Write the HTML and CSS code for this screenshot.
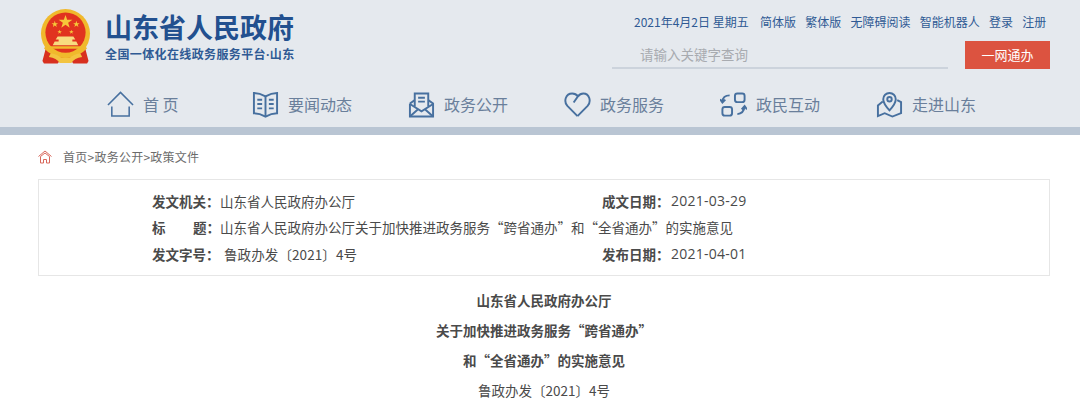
FILE: index.html
```html
<!DOCTYPE html>
<html lang="zh-CN">
<head>
<meta charset="utf-8">
<title>山东省人民政府</title>
<link rel="stylesheet" href="styles.css">
</head>
<body>
<header class="site-header">
  <div class="top">
    <div class="brand">
      <svg class="emblem" viewBox="0 0 52 56" aria-hidden="true">
        <path d="M7 36 L2.500 53 L4 55.500 H18 L21 52 H31 L34 55.500 H48 L49.500 53 L45 36 Z" fill="#d8301f"/>
        <circle cx="26" cy="25" r="25" fill="#f0b92c"/>
        <circle cx="26" cy="24" r="20.500" fill="#e1331f"/>
        <path d="M26 6 l1.700 5 h5.300 l-4.300 3.100 1.600 5 -4.300 -3.100 -4.300 3.100 1.600 -5 -4.300 -3.100 h5.300 Z" fill="#f6c93a"/>
        <path d="M15 12 l.9 2.400 h2.500 l-2 1.500 .8 2.400 -2.200 -1.500 -2 1.500 .8 -2.400 -2 -1.500 h2.500 Z M37 12 l.9 2.400 h2.500 l-2 1.500 .8 2.400 -2.200 -1.500 -2 1.500 .8 -2.400 -2 -1.500 h2.500 Z M20 21 l.6 1.600 h1.700 l-1.400 1 .5 1.600 -1.400 -1 -1.400 1 .5 -1.600 -1.400 -1 h1.700 Z M32 21 l.6 1.600 h1.700 l-1.400 1 .5 1.600 -1.400 -1 -1.400 1 .5 -1.600 -1.400 -1 h1.700 Z" fill="#f6c93a"/>
        <path d="M18 28 H34 L36 31 H33 V33 H37 L39 37 H13 L15 33 H19 V31 H16 Z" fill="#f8dc80"/>
        <path d="M10 38 H42 V40.500 H10 Z" fill="#f0b92c"/>
        <path d="M7 37 Q12 44 26 46 Q40 44 45 37 L48 40 Q40 49 26 50 Q12 49 4 40 Z" fill="#f0b92c"/>
        <path d="M11 45 Q18 46 22 50 H30 Q34 46 41 45 L43 49 Q35 50 32 55 H20 Q17 50 9 49 Z" fill="#f3c440"/>
      </svg>
      <div class="brand-text">
        <div class="brand-name">山东省人民政府</div>
        <div class="brand-sub">全国一体化在线政务服务平台<span class="dot">·</span>山东</div>
      </div>
    </div>
    <div class="tools">
      <div class="links">
        <span class="date">2021年4月2日 星期五</span>
        <a>简体版</a><a>繁体版</a><a>无障碍阅读</a><a>智能机器人</a><a>登录</a><a>注册</a>
      </div>
      <div class="search-row">
        <div class="search">请输入关键字查询</div>
        <a class="one-net">一网通办</a>
      </div>
    </div>
  </div>
  <nav class="nav">
    <a class="nav-item first">
      <svg class="nav-icon thin" viewBox="0 0 28 28" aria-hidden="true"><path d="M1 14.500 L14 1.500 L27 14.500"/><path d="M5 16 V26 H23 V16"/></svg>
      <span>首 页</span>
    </a>
    <a class="nav-item">
      <svg class="nav-icon" viewBox="0 0 28 28" aria-hidden="true"><path d="M14 5.500 Q8 2 2 2 V23 Q8 23 14 26.500 Q20 23 26 23 V2 Q20 2 14 5.500 Z"/><path d="M14 5.500 V26.500"/><path d="M5.500 9 H10.500 M5.500 13.500 H10.500 M5.500 18 H10.500 M17.500 9 H22.500 M17.500 13.500 H22.500 M17.500 18 H22.500"/></svg>
      <span>要闻动态</span>
    </a>
    <a class="nav-item">
      <svg class="nav-icon" viewBox="0 0 28 28" aria-hidden="true"><path d="M2 13 V26.500 H26 V13 L21 9.500"/><path d="M7 9.500 L2 13"/><path d="M7 16 V2.500 H21 V16"/><path d="M10.500 7 H17.500 M10.500 11 H17.500"/><path d="M2 13.500 L14 21 L26 13.500 M2 26.500 L11 18.500 M26 26.500 L17 18.500"/></svg>
      <span>政务公开</span>
    </a>
    <a class="nav-item">
      <svg class="nav-icon" viewBox="0 0 28 28" aria-hidden="true"><path d="M14 26 L3.500 15.500 C-0.500 11 1.500 2.500 8.500 2.500 C11 2.500 13 3.500 14.500 5.500 L10 12"/><path d="M14.500 5.500 C16 3.500 18 2.500 20 2.500 C26.500 2.500 28.500 11 24.500 15.500 L14 26"/></svg>
      <span>政务服务</span>
    </a>
    <a class="nav-item">
      <svg class="nav-icon" viewBox="0 0 28 28" aria-hidden="true"><path d="M10 4.500 Q3 4.500 2.500 11 M0 8.500 L2.500 12 L5.500 9"/><rect x="15.500" y="2.500" width="10" height="9" rx="2.500"/><rect x="2.500" y="16.500" width="10" height="9" rx="2.500"/><path d="M18 24 Q24.500 23.500 25.500 16.500 M22.500 19 L25.500 15.500 L28 19"/></svg>
      <span>政民互动</span>
    </a>
    <a class="nav-item">
      <svg class="nav-icon" viewBox="0 0 28 28" aria-hidden="true"><path d="M14 20 Q7.500 13 7.500 8.500 A6.500 6.500 0 0 1 20.500 8.500 Q20.500 13 14 20 Z"/><circle cx="14" cy="8.500" r="2.300"/><path d="M7 11 L2 15 V26 L9 23 L17 26.500 L26 23 V11.500 L22 9.500"/></svg>
      <span>走进山东</span>
    </a>
  </nav>
  <div class="strip"></div>
</header>
<main class="content">
  <div class="crumb">
    <svg class="home" viewBox="0 0 14 14" aria-hidden="true"><path d="M.5 6.500 L7 1 L13.500 6.500 M2.500 6.500 L7 3 L11.500 6.500 M2.500 6.500 V13 H5.500 V9.500 H8.500 V13 H11.500 V6.500"/></svg>
    <span>首页&gt;政务公开&gt;政策文件</span>
  </div>
  <section class="meta">
    <div class="meta-row">
      <div class="cell"><b>发文机关：</b><span>山东省人民政府办公厅</span></div>
      <div class="cell"><b>成文日期：</b><span class="num">2021-03-29</span></div>
    </div>
    <div class="meta-row">
      <div class="cell"><b class="spread"><i>标</i><i>题：</i></b><span>山东省人民政府办公厅关于加快推进政务服务“跨省通办”和“全省通办”的实施意见</span></div>
    </div>
    <div class="meta-row">
      <div class="cell"><b>发文字号：</b><span class="code">鲁政办发〔2021〕4号</span></div>
      <div class="cell"><b>发布日期：</b><span class="num">2021-04-01</span></div>
    </div>
  </section>
  <article class="doc">
    <p class="strong">山东省人民政府办公厅</p>
    <p class="strong">关于加快推进政务服务“跨省通办”</p>
    <p class="strong">和“全省通办”的实施意见</p>
    <p>鲁政办发〔2021〕4号</p>
  </article>
</main>
</body>
</html>
```
FILE: styles.css
```css
* { box-sizing: border-box; }
html, body { margin: 0; height: 405px; overflow: hidden; background: #fff; }
body { font-family: "Noto Sans CJK SC", sans-serif; color: #4a4a4a; }
.site-header { background: #e5e9ee; }
.top { display: flex; justify-content: space-between; height: 83px; padding: 9px 30px 0 40px; }
.brand { display: flex; gap: 14px; align-items: flex-start; }
.emblem { width: 51px; height: 55px; display: block; }
.brand-text { display: flex; flex-direction: column; }
.brand-name { font: 700 27px/30px "Noto Sans CJK SC", sans-serif; color: #22508f; margin-top: 3px; }
.brand-sub { font: 700 12px/18px "Noto Sans CJK SC", sans-serif; color: #2f5a94; margin-top: 3px; letter-spacing: .38px; }
.dot { font-family: "Open Sans", sans-serif; }
.tools { display: flex; flex-direction: column; width: 438px; }
.links { display: flex; height: 26px; margin-top: 5px; padding-left: 22px; white-space: nowrap; font: 400 12px/16px "Noto Sans CJK SC", sans-serif; color: #2f5a94; }
.links a { margin-left: 9.250px; }
.links .date { margin-right: 2px; }
.search-row { display: flex; justify-content: space-between; align-items: flex-end; margin-top: 1px; }
.search { width: 336px; height: 28px; padding-left: 28px; border-bottom: 2px solid #ccd3dc; font: 400 13.5px/26px "Noto Sans CJK SC", sans-serif; color: #a8abb0; }
.one-net { width: 85px; height: 28px; background: #dc5340; color: #fff; text-align: center; font: 400 13px/27px "Noto Sans CJK SC", sans-serif; }
.nav { display: flex; height: 44px; padding: 7px 0 0 107px; }
.nav-item { display: flex; width: 156px; align-items: flex-start; gap: 9px; font: 400 16px/28px "Noto Sans CJK SC", sans-serif; color: #6a7f9b; }
.nav-item.first { width: 145px; }
.nav-icon { width: 27px; height: 27px; flex: none; fill: none; stroke: #47709f; stroke-width: 2; margin-top: 1px; }
.nav-icon.thin { stroke-width: 1.600; }
.strip { height: 8px; background: #b9c5d3; }
.content { padding: 0 30px 0 38px; }
.crumb { display: flex; align-items: center; height: 44px; gap: 11px; letter-spacing: .25px; font: 400 12px/16px "Noto Sans CJK SC", sans-serif; color: #6b6b6b; }
.home { width: 14px; height: 14px; fill: none; stroke: #d9685c; stroke-width: 1; }
.meta { height: 97px; border: 1px solid #e6e6e6; padding: 7.750px 0 0 113px; font: 400 13.5px/26.500px "Noto Sans CJK SC", sans-serif; }
.meta-row { display: flex; height: 26.500px; }
.cell { display: flex; flex: none; width: 450px; white-space: nowrap; }
.cell b { width: 68px; flex: none; }
.cell .spread { display: flex; justify-content: space-between; }
.cell .spread i { font-style: normal; }
.num { font-family: "Open Sans", sans-serif; font-size: 14px; letter-spacing: .25px; margin-left: 1px; }
.code { margin-left: 4px; letter-spacing: .1px; }
.doc { padding-top: 9px; text-align: center; font: 400 13.5px/30px "Noto Sans CJK SC", sans-serif; }
.doc p { margin: 0; }
.doc .strong { font-weight: 700; }
```
